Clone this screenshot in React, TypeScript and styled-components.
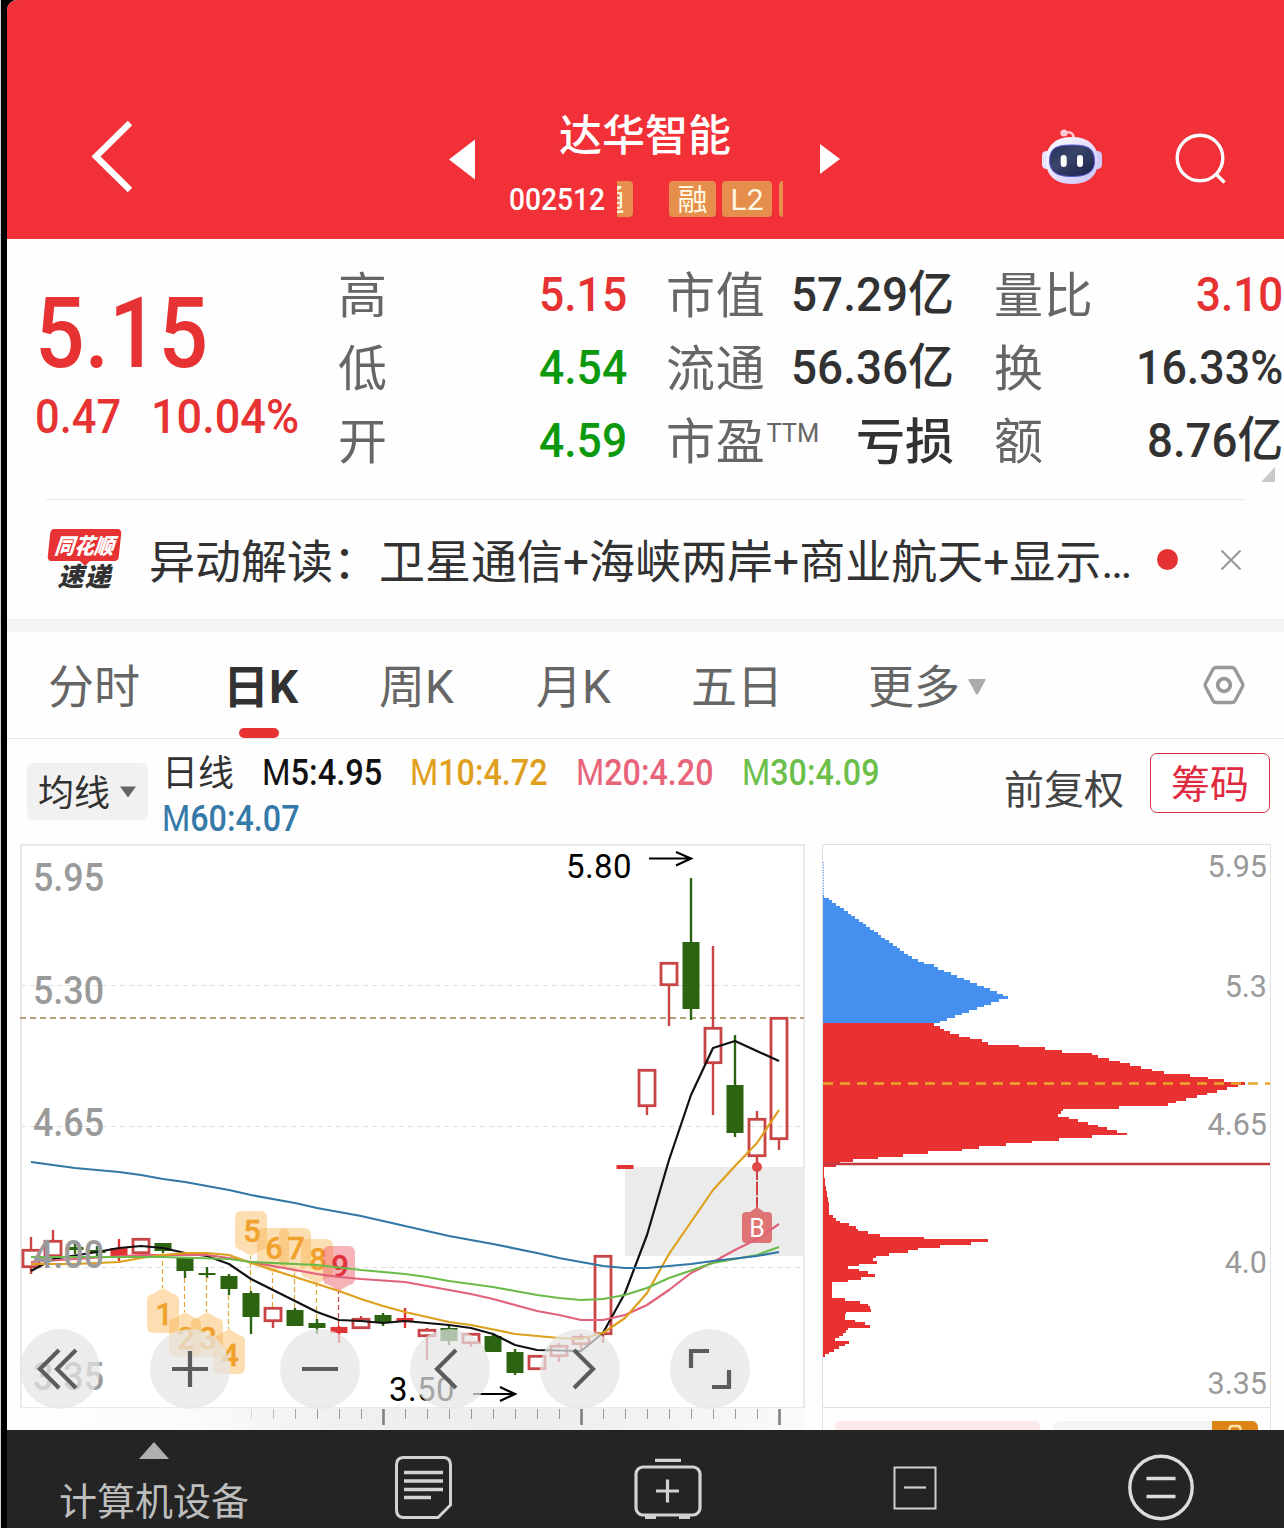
import React, { useLayoutEffect, useRef, useState } from "react";
import styled, { createGlobalStyle } from "styled-components";

const RED = "#e63232";
const GREEN = "#0d990d";
const INK = "#323232";
const CANDLE_RED = "#c94444";
const CANDLE_GREEN = "#2d6412";

const GlobalStyle = createGlobalStyle`
  html, body { margin: 0; padding: 0; background: #fff; }
  *, *::before, *::after { box-sizing: border-box; }
  body, svg text {
    font-family: Roboto, "Noto Sans CJK SC", sans-serif;
  }
  svg { display: block; flex: none; }
`;

/* ---------- condensed numerals ---------- */

const FitBox = styled.span<{ $w: number }>`
  display: inline-block;
  flex: none;
  width: ${(p) => p.$w}px;
  white-space: nowrap;
`;

const FitInner = styled.span`
  display: inline-block;
  transform-origin: 0 50%;
`;

function Fit({ w, children }: { w: number; children: React.ReactNode }) {
  const ref = useRef<HTMLSpanElement>(null);
  const [k, setK] = useState(1);
  useLayoutEffect(() => {
    if (ref.current) setK(w / ref.current.offsetWidth);
  }, [w]);
  return (
    <FitBox $w={w}>
      <FitInner ref={ref} style={{ transform: `scaleX(${k})` }}>
        {children}
      </FitInner>
    </FitBox>
  );
}

/* ---------- shell ---------- */

const Screen = styled.div`
  display: flex;
  width: 1284px;
  height: 1528px;
  overflow: hidden;
  background: #000;
`;

const Edge = styled.div`
  flex: none;
  width: 7px;
  border-left: 1px solid #cfcfcf;
  background: #000;
`;

const Page = styled.main`
  display: flex;
  flex-direction: column;
  width: 1277px;
  height: 1528px;
  overflow: hidden;
  background: #fefefe;
  border-top-left-radius: 10px;
`;

/* ---------- header ---------- */

const Header = styled.header`
  display: flex;
  flex: none;
  align-items: flex-start;
  height: 239px;
  padding: 112px 49px 0 83px;
  background: #f23038;
`;

const IconSlot = styled.div<{ $left: number; $top: number }>`
  flex: none;
  margin: ${(p) => p.$top}px 0 0 ${(p) => p.$left}px;
`;

const TitleBlock = styled.div`
  display: flex;
  flex: none;
  flex-direction: column;
  width: 274px;
  margin-left: 34px;
  color: #fff;
`;

const Title = styled.h1`
  margin: 0 0 0 50px;
  font-size: 43px;
  font-weight: 500;
  line-height: 48px;
`;

const CodeRow = styled.div`
  display: flex;
  align-items: center;
  height: 36px;
  margin-top: 21px;
  font-size: 32px;
  font-weight: 500;
  line-height: 36px;
`;

const TagWindow = styled.div`
  display: flex;
  justify-content: flex-end;
  width: 166px;
  height: 36px;
  margin-left: 12px;
  overflow: hidden;
`;

const Tag = styled.span<{ $w: number; $gap: number }>`
  flex: none;
  width: ${(p) => p.$w}px;
  height: 36px;
  margin-left: ${(p) => p.$gap}px;
  border-radius: 4px;
  background: #e68e4b;
  color: #fff8e4;
  font-size: 30px;
  font-weight: 400;
  line-height: 37px;
  text-align: center;
`;

const TagSliver = styled.span`
  flex: none;
  width: 4px;
  height: 36px;
  margin-left: 7px;
  border-radius: 4px 0 0 4px;
  background: #e68e4b;
`;

/* ---------- quote ---------- */

const Quote = styled.section`
  display: flex;
  flex: none;
  height: 260px;
  padding: 19px 1px 0 28px;
`;

const PriceBlock = styled.div`
  width: 303px;
  padding-top: 26px;
  color: ${RED};
`;

const Price = styled.div`
  height: 100px;
  font-size: 98px;
  font-weight: 500;
  line-height: 100px;
`;

const Changes = styled.div`
  display: flex;
  gap: 30px;
  height: 60px;
  margin-top: 3px;
  font-size: 49px;
  font-weight: 500;
  line-height: 60px;
`;

const StatColumn = styled.div<{ $w: number; $gap: number }>`
  flex: none;
  width: ${(p) => p.$w}px;
  margin-left: ${(p) => p.$gap}px;
`;

const StatRow = styled.div`
  display: flex;
  justify-content: space-between;
  height: 73px;
  font-size: 49px;
  line-height: 73px;
  white-space: nowrap;
`;

const StatLabel = styled.span`
  padding-top: 2px;
  color: #666;
  letter-spacing: 0.7px;
`;

const Sup = styled.span`
  display: inline-block;
  margin-left: 1px;
  font-size: 25.5px;
  letter-spacing: 0;
  transform: translateY(-17px);
`;

const StatValue = styled.span<{ $color?: string; $drop?: boolean }>`
  padding-top: ${(p) => (p.$drop ? 2 : 0)}px;
  color: ${(p) => p.$color ?? INK};
  font-weight: 500;
`;

const CornerWrap = styled.div`
  align-self: flex-end;
  width: 0;
  margin-bottom: 17px;

  svg { margin-left: -22px; }
`;

const Divider = styled.div`
  flex: none;
  height: 1px;
  margin: 0 40px 0 39px;
  background: #e8e8e8;
`;

/* ---------- news ---------- */

const News = styled.section`
  display: flex;
  flex: none;
  align-items: center;
  height: 119px;
  padding: 0 42px 0 41px;
`;

const Brand = styled.div`
  display: flex;
  flex: none;
  flex-direction: column;
  align-items: center;
  width: 73px;
  height: 62px;
  font-style: italic;
  font-weight: 900;
`;

const BrandTop = styled.div`
  width: 71px;
  height: 32px;
  border-radius: 4px;
  background: ${RED};
  color: #fff;
  font-size: 22px;
  line-height: 35px;
  text-align: center;
  transform: skewX(-6deg);
  white-space: nowrap;
`;

const BrandPointer = styled.div`
  width: 0;
  height: 0;
  border: 5px solid transparent;
  border-top-color: ${RED};
  border-bottom: 0;
`;

const BrandBottom = styled.div`
  margin-top: -2px;
  color: ${INK};
  font-size: 26px;
  line-height: 26px;
  letter-spacing: 1px;
`;

const Headline = styled.div`
  flex: none;
  width: 984px;
  margin-left: 28px;
  padding-top: 5px;
  color: ${INK};
  font-size: 46px;
  line-height: 60px;
  white-space: nowrap;
`;

const Dot = styled.span`
  flex: none;
  width: 21px;
  height: 21px;
  margin: -1px 43px 0 24px;
  border-radius: 50%;
  background: ${RED};
`;

const Band = styled.div`
  flex: none;
  height: 13px;
  background: #f4f4f4;
`;

/* ---------- period tabs ---------- */

const Tabs = styled.nav`
  display: flex;
  flex: none;
  align-items: stretch;
  height: 107px;
  padding-left: 41px;
  border-bottom: 1px solid #e4e4e4;
`;

const Tab = styled.div<{ $w: number; $active?: boolean }>`
  display: flex;
  flex: none;
  flex-direction: column;
  justify-content: space-between;
  width: ${(p) => p.$w}px;
  padding-top: 25px;
  color: ${(p) => (p.$active ? INK : "#666")};
  font-size: 46px;
  font-weight: ${(p) => (p.$active ? 700 : 400)};
  line-height: 60px;
  white-space: nowrap;
`;

const TabLabel = styled.span`
  display: flex;
  align-items: center;
  gap: 8px;
`;

const TabMark = styled.span`
  width: 40px;
  height: 10px;
  margin-left: 16px;
  border-radius: 5px;
  background: ${RED};
`;

const GearSlot = styled.div`
  display: flex;
  align-items: center;
  margin-left: 3px;
`;

/* ---------- moving-average legend ---------- */

const Legend = styled.section`
  display: flex;
  flex: none;
  height: 105px;
  padding: 0 14px 0 20px;
`;

const Picker = styled.div`
  display: flex;
  flex: none;
  align-items: center;
  gap: 10px;
  width: 121px;
  height: 57px;
  margin-top: 24px;
  padding-left: 11px;
  border-radius: 6px;
  background: #f1f1f1;
  color: ${INK};
  font-size: 36px;
  line-height: 57px;
`;

const PickerText = styled.span`
  padding-top: 6px;
`;

const Averages = styled.div`
  display: flex;
  flex: none;
  flex-wrap: wrap;
  align-content: flex-start;
  column-gap: 28px;
  width: 780px;
  margin: 11px 0 0 14px;
  font-size: 37px;
  line-height: 46px;
`;

const SeriesName = styled.span`
  width: 72px;
  height: 46px;
  padding-top: 1px;
  color: ${INK};
  font-size: 36px;
`;

const Average = styled.span<{ $color: string }>`
  color: ${(p) => p.$color};
  font-weight: 500;
`;

const Letter = styled.span`
  font-weight: 400;
`;

const Adjust = styled.div`
  margin: 22px 0 0 62px;
  color: #444;
  font-size: 40px;
  line-height: 60px;
  white-space: nowrap;
`;

const ChipButton = styled.button`
  flex: none;
  width: 120px;
  height: 60px;
  margin: 14px 0 0 auto;
  padding: 5px 0 0;
  border: 1.5px solid #d33344;
  border-radius: 7px;
  background: #fff;
  color: #e02a40;
  font-family: inherit;
  font-size: 39px;
  line-height: 53px;
`;

/* ---------- charts ---------- */

const Charts = styled.section`
  display: flex;
  flex: none;
  height: 586px;
  padding-left: 13px;
  overflow: hidden;
`;

const KPanel = styled.div`
  position: relative;
  flex: none;
  width: 785px;
`;

const Ruler = styled.div`
  height: 22px;
  background: linear-gradient(90deg, #fefefe 0%, #fbfbfb 22%, #f0f0f0 40%, #ededed 66%, #fafafa 100%);
`;

const Controls = styled.div`
  position: absolute;
  left: 0;
  top: 485px;
  display: flex;
  gap: 50px;
`;

const RoundButton = styled.div`
  display: flex;
  align-items: center;
  justify-content: center;
  width: 80px;
  height: 80px;
  border-radius: 50%;
  background: rgba(228, 228, 228, 0.72);
`;

const ChipPanel = styled.div`
  display: flex;
  flex: none;
  flex-direction: column;
  width: 449px;
  margin-left: 17px;
`;

const ChipFooter = styled.div`
  display: flex;
  gap: 13px;
  height: 22px;
  padding: 13px 12px 0;
  border: solid #e2e2e2;
  border-width: 0 1px;
`;

const ChipTab = styled.div<{ $bg: string }>`
  display: flex;
  flex: 1;
  justify-content: flex-end;
  height: 40px;
  overflow: hidden;
  border-radius: 6px;
  background: ${(p) => p.$bg};
`;

const LockBadge = styled.div`
  display: flex;
  justify-content: center;
  width: 46px;
  background: #dc8414;
`;

/* ---------- bottom bar ---------- */

const BottomBar = styled.footer`
  display: flex;
  flex: none;
  height: 98px;
  background: #242424;
  color: #bdbdbd;
`;

const Sector = styled.div`
  display: flex;
  flex: none;
  flex-direction: column;
  align-items: center;
  width: 294px;
  padding-top: 12px;
  font-size: 38px;
  line-height: 48px;
`;

const SectorName = styled.span`
  margin-top: 19px;
  white-space: nowrap;
`;

const BarIcon = styled.div<{ $left: number; $top: number }>`
  flex: none;
  margin: ${(p) => p.$top}px 0 0 ${(p) => p.$left}px;
`;

/* ---------- data ---------- */

type Stat = { label: string; sup?: string; value: string; w: number; color?: string };

const STATS: { w: number; gap: number; rows: Stat[] }[] = [
  {
    w: 289,
    gap: 0,
    rows: [
      { label: "高", value: "5.15", w: 88, color: RED },
      { label: "低", value: "4.54", w: 88, color: GREEN },
      { label: "开", value: "4.59", w: 88, color: GREEN },
    ],
  },
  {
    w: 288,
    gap: 39,
    rows: [
      { label: "市值", value: "57.29亿", w: 163 },
      { label: "流通", value: "56.36亿", w: 163 },
      { label: "市盈", sup: "TTM", value: "亏损", w: 98 },
    ],
  },
  {
    w: 289,
    gap: 40,
    rows: [
      { label: "量比", value: "3.10", w: 87, color: RED },
      { label: "换", value: "16.33%", w: 147 },
      { label: "额", value: "8.76亿", w: 136 },
    ],
  },
];

const AVERAGES = [
  { name: "5:4.95", color: "#111", w: 120 },
  { name: "10:4.72", color: "#dfa01e", w: 138 },
  { name: "20:4.20", color: "#e8647a", w: 138 },
  { name: "30:4.09", color: "#6cbf4a", w: 138 },
  { name: "60:4.07", color: "#3579a8", w: 138 },
];

/* kind, body top, body bottom, high, low */
type Candle = ["h" | "f" | "g", number, number, number, number];

const CANDLES: Candle[] = [
  ["h", 1249, 1268, 1237, 1274],
  ["h", 1240, 1257, 1230, 1257],
  ["g", 1247, 1250, 1244, 1254],
  ["g", 1250, 1253, 1246, 1256],
  ["f", 1248, 1257, 1239, 1261],
  ["h", 1238, 1254, 1238, 1256],
  ["g", 1243, 1251, 1243, 1253],
  ["g", 1258, 1271, 1258, 1278],
  ["g", 1273, 1275, 1267, 1278],
  ["g", 1276, 1289, 1274, 1295],
  ["g", 1293, 1317, 1291, 1334],
  ["h", 1307, 1322, 1307, 1328],
  ["g", 1310, 1326, 1308, 1326],
  ["g", 1323, 1328, 1319, 1334],
  ["f", 1327, 1333, 1326, 1343],
  ["h", 1318, 1329, 1316, 1329],
  ["g", 1315, 1322, 1313, 1326],
  ["f", 1318, 1322, 1308, 1328],
  ["h", 1329, 1337, 1328, 1360],
  ["g", 1328, 1341, 1326, 1345],
  ["h", 1333, 1344, 1333, 1347],
  ["g", 1336, 1352, 1335, 1352],
  ["g", 1352, 1373, 1349, 1375],
  ["h", 1355, 1370, 1355, 1370],
  ["h", 1345, 1357, 1343, 1362],
  ["h", 1336, 1345, 1334, 1349],
  ["h", 1255, 1335, 1255, 1343],
  ["f", 1165, 1169, 1165, 1169],
  ["h", 1069, 1107, 1069, 1115],
  ["h", 962, 986, 962, 1026],
  ["g", 942, 1009, 878, 1020],
  ["h", 1027, 1064, 946, 1115],
  ["g", 1085, 1133, 1035, 1137],
  ["h", 1118, 1157, 1111, 1166],
  ["h", 1017, 1140, 1017, 1150],
];

const LINES = [
  {
    color: "#111",
    points:
      "31,1271 53,1259 97,1252 119,1248 141,1246 163,1248 185,1253 207,1256 229,1264 251,1279 273,1290 295,1301 317,1312 339,1320 361,1321 383,1323 405,1321 449,1325 471,1328 493,1334 515,1345 537,1350 581,1351 603,1333 625,1293 647,1235 669,1160 691,1095 713,1048 735,1041 779,1061",
  },
  {
    color: "#e2617a",
    points:
      "31,1262 75,1259 141,1255 207,1255 229,1258 251,1262 295,1270 317,1274 339,1277 361,1279 405,1282 427,1286 471,1294 493,1299 515,1305 537,1311 559,1315 581,1320 603,1320 625,1315 647,1305 669,1290 691,1273 713,1262 735,1250 757,1239 779,1224",
  },
  {
    color: "#dda01c",
    points:
      "31,1264 75,1264 119,1262 141,1258 163,1255 185,1253 207,1253 229,1255 251,1263 295,1277 317,1284 339,1291 361,1299 383,1306 405,1312 449,1322 471,1325 515,1334 559,1338 581,1339 603,1333 625,1318 647,1293 669,1254 691,1222 713,1190 735,1166 757,1143 779,1110",
  },
  {
    color: "#6cbb4a",
    points:
      "31,1257 119,1257 163,1257 229,1259 251,1262 317,1265 361,1270 405,1274 427,1277 449,1281 493,1287 515,1291 537,1295 559,1298 581,1300 603,1299 625,1295 647,1288 669,1278 713,1263 757,1255 779,1247",
  },
  {
    color: "#3278a4",
    points:
      "31,1162 75,1168 119,1172 141,1175 163,1179 185,1182 229,1190 251,1195 295,1203 317,1208 361,1216 405,1226 449,1236 493,1244 537,1253 559,1258 581,1262 603,1266 625,1268 647,1268 669,1266 691,1264 713,1261 757,1256 779,1252",
  },
];

/* nine-turn markers: digit, centre x, box top, stem end, box above candle */
type Mark = { n: number; x: number; top: number; stem: number; up?: boolean; hot?: boolean };

const MARKS: Mark[] = [
  { n: 1, x: 163, top: 1294, stem: 1253 },
  { n: 2, x: 185, top: 1318, stem: 1278 },
  { n: 3, x: 207, top: 1318, stem: 1277 },
  { n: 4, x: 229, top: 1335, stem: 1295 },
  { n: 5, x: 251, top: 1211, stem: 1291, up: true },
  { n: 6, x: 273, top: 1228, stem: 1307, up: true },
  { n: 7, x: 295, top: 1228, stem: 1308, up: true },
  { n: 8, x: 317, top: 1239, stem: 1319, up: true },
  { n: 9, x: 339, top: 1246, stem: 1326, up: true, hot: true },
];

const AXIS: [string, number][] = [
  ["5.95", 891],
  ["5.30", 1004],
  ["4.65", 1136],
  ["4.00", 1267.5],
  ["3.35", 1389.5],
];

const CHIP_AXIS: [string, number][] = [
  ["5.95", 877.5],
  ["5.3", 997.5],
  ["4.65", 1135.5],
  ["4.0", 1273.5],
  ["3.35", 1394.5],
];

const PROFILE: [number, number][] = [
  [895, 823], [958, 912], [967, 934], [997, 1008], [1024, 934], [1033, 950], [1042, 988],
  [1049, 1045], [1055, 1092], [1073, 1164], [1075, 1190], [1084, 1245], [1104, 1168],
  [1111, 1063], [1115, 1058], [1134, 1127], [1136, 1092], [1149, 962], [1162, 840],
  [1167, 836], [1168, 824], [1176, 824], [1205, 829], [1214, 829], [1222, 840], [1227, 856], [1231, 858],
  [1235, 880], [1238, 924], [1242, 988], [1246, 940], [1250, 918], [1256, 876], [1258, 870],
  [1261, 877], [1267, 848], [1275, 875], [1281, 848], [1284, 832], [1296, 832], [1299, 845],
  [1304, 868], [1310, 871], [1312, 846], [1318, 845], [1325, 870], [1330, 848], [1340, 835],
  [1343, 849], [1350, 834], [1357, 823],
];

const BAR_STEP = 2.67;

function profileWidth(y: number) {
  for (const [vy, vx] of PROFILE) {
    if (vy >= y && vy < y + BAR_STEP) return vx - 823;
  }
  const mid = y + BAR_STEP / 2;
  for (let i = 1; i < PROFILE.length; i++) {
    const [y0, x0] = PROFILE[i - 1];
    const [y1, x1] = PROFILE[i];
    if (mid <= y1) return x0 + ((x1 - x0) * (mid - y0)) / (y1 - y0) - 823;
  }
  return 0;
}

const BARS = Array.from({ length: 173 }, (_, i) => {
  const y = 895 + i * BAR_STEP;
  return { y, w: Math.max(0.5, profileWidth(y)), blue: y < 1022.5 };
});

/* ---------- drawings ---------- */

const CandleShape = ({ c, x }: { c: Candle; x: number }) => {
  const [kind, top, bottom, high, low] = c;
  const color = kind === "g" ? CANDLE_GREEN : kind === "f" ? "#e03434" : CANDLE_RED;
  const hollow = kind === "h";
  return (
    <g stroke={color} strokeWidth={2.4} fill="none">
      {high < top && <line x1={x} x2={x} y1={high} y2={top} />}
      {low > bottom && <line x1={x} x2={x} y1={bottom} y2={low} />}
      {hollow ? (
        <rect x={x - 8} y={top + 1.3} width={16} height={bottom - top - 2.6} strokeWidth={2.8} />
      ) : (
        <rect x={x - 8.5} y={top} width={17} height={bottom - top} fill={color} stroke="none" />
      )}
    </g>
  );
};

const MarkShape = ({ m }: { m: Mark }) => {
  const bg = m.hot ? "#ee4a58" : "#f9b34a";
  const edge = m.up ? m.top + 39 : m.top;
  const tip = m.up ? m.top + 45 : m.top - 6;
  return (
    <g>
      <line
        x1={m.x - 0.5}
        x2={m.x - 0.5}
        y1={m.stem}
        y2={tip}
        stroke={m.hot ? "#d04040" : "#dfa63a"}
        strokeWidth={1.2}
        strokeDasharray="5 3"
      />
      <g fill={bg} opacity={0.42}>
        <rect x={m.x - 16} y={m.top} width={32} height={39} rx={6} />
        <path d={`M${m.x - 10} ${edge}L${m.x} ${tip}L${m.x + 10} ${edge}Z`} />
      </g>
      <text
        x={m.x + 1}
        y={m.top + 30.5}
        textAnchor="middle"
        fontSize={31}
        fontWeight={500}
        fill={m.hot ? "#e03238" : "#f0a12c"}
        stroke={m.hot ? "#e03238" : "#f0a12c"}
        strokeWidth={0.4}
      >
        {m.n}
      </text>
    </g>
  );
};

const KChart = () => (
  <svg width={785} height={564} viewBox="20 844 785 564">
    <rect x={21} y={845} width={783} height={563} fill="#fff" stroke="#e9e9e9" strokeWidth={2} />
    <g stroke="#dedede" strokeWidth={1.2} strokeDasharray="5 4">
      <line x1={21} x2={804} y1={985.5} y2={985.5} />
      <line x1={21} x2={804} y1={1126.5} y2={1126.5} />
      <line x1={21} x2={804} y1={1267.5} y2={1267.5} />
    </g>
    <line x1={20} x2={804} y1={1018} y2={1018} stroke="#b5a375" strokeWidth={1.8} strokeDasharray="6 4" />
    <rect x={625} y={1167} width={180} height={89} fill="#ebebeb" />
    {CANDLES.map((c, i) => (
      <CandleShape key={i} c={c} x={31 + i * 22} />
    ))}
    {MARKS.map((m) => (
      <MarkShape key={m.n} m={m} />
    ))}
    <line x1={757} x2={757} y1={1166} y2={1209} stroke="#d04040" strokeWidth={2} strokeDasharray="14 1.5" />
    <circle cx={757} cy={1167} r={5} fill="#e04848" />
    <path d="M750 1212L757 1207L764 1212Z" fill="#df7474" />
    <rect x={742} y={1212} width={30} height={31} rx={4} fill="#df7474" />
    {LINES.map((l) => (
      <polyline key={l.color} points={l.points} fill="none" stroke={l.color} strokeWidth={2.2} strokeLinejoin="round" />
    ))}
    <text x={757} y={1237} textAnchor="middle" fontSize={25} fill="#fff">
      B
    </text>
    {AXIS.map(([t, y]) => (
      <text key={t} x={33} y={y} fontSize={38} fontWeight={500} fill="#9a9a9a" textLength={71} lengthAdjust="spacingAndGlyphs">
        {t}
      </text>
    ))}
    <g fontSize={33} fill="#000" letterSpacing={0.4}>
      <text x={566} y={878}>5.80</text>
      <text x={389} y={1401}>3.50</text>
    </g>
    <g fill="none" stroke="#000" strokeWidth={2.2}>
      <path d="M649 858.5H690M676 852L691 858.5L676 865.5" />
      <path d="M473 1394H514M500 1387L515 1394L500 1401" />
    </g>
  </svg>
);

const RulerTicks = () => (
  <svg width={785} height={22} viewBox="20 1408 785 22">
    {Array.from({ length: 25 }, (_, i) => {
      const x = 251 + i * 22;
      const major = x === 383 || x === 581 || x === 779;
      return (
        <line
          key={i}
          x1={x + 0.5}
          x2={x + 0.5}
          y1={1409}
          y2={major ? 1425 : 1419}
          stroke={major ? "#808080" : "#999"}
          strokeWidth={major ? 2.6 : 1}
          opacity={major ? 1 : Math.min(1, 0.35 + i * 0.25)}
        />
      );
    })}
  </svg>
);

const ChipChart = () => (
  <svg width={449} height={564} viewBox="822 844 449 564">
    <rect x={822.5} y={844.5} width={448} height={563} fill="#fff" stroke="#e0e0e0" />
    <line x1={823.5} x2={823.5} y1={862} y2={895} stroke="#4590ee" strokeDasharray="1 1.6" />
    <g shapeRendering="crispEdges">
      {BARS.map((b) => (
        <rect key={b.y} x={823} y={b.y} width={b.w} height={2.8} fill={b.blue ? "#4590ee" : "#e93131"} />
      ))}
    </g>
    <line x1={823} x2={1270} y1={1164} y2={1164} stroke="#c23b42" strokeWidth={2.4} />
    <line x1={823} x2={1270} y1={1083.5} y2={1083.5} stroke="#eba62c" strokeWidth={2.4} strokeDasharray="10 7" />
    {CHIP_AXIS.map(([t, y]) => (
      <text key={t} x={1267} y={y - 0.5} textAnchor="end" fontSize={30.5} fill="#999">
        {t}
      </text>
    ))}
  </svg>
);

const Robot = () => (
  <svg width={60} height={56} viewBox="0 0 60 56">
    <defs>
      <linearGradient id="shell" x1="0" y1="0" x2="1" y2="1">
        <stop offset="0" stopColor="#ffffff" />
        <stop offset="0.55" stopColor="#e3dcfb" />
        <stop offset="1" stopColor="#c7c3f8" />
      </linearGradient>
      <linearGradient id="visor" x1="0" y1="0" x2="1" y2="1">
        <stop offset="0" stopColor="#28305a" />
        <stop offset="0.4" stopColor="#3a4468" />
        <stop offset="1" stopColor="#16204c" />
      </linearGradient>
    </defs>
    <path d="M23 4C28 2 32 4 31.5 10" fill="none" stroke="#ffc4cf" strokeWidth={2.6} />
    <circle cx={22} cy={4} r={3.6} fill="#ffc9d3" />
    <rect x={0} y={22} width={9} height={18} rx={4.5} fill="#e8e4fc" />
    <rect x={51} y={22} width={9} height={18} rx={4.5} fill="#cfc9f8" />
    <path
      d="M30 8C46 8 55 16 56 29C57 43 50 55 30 55C10 55 3 43 4 29C5 16 14 8 30 8Z"
      fill="url(#shell)"
    />
    <path
      d="M30 16C45 16 52 18.500 52.500 31C53 42.500 46 47.500 30 47.500C14 47.500 7.500 42.500 7.500 31C8 18.500 15 16 30 16Z"
      fill="url(#visor)"
      stroke="#5d5be0"
      strokeWidth={1}
    />
    <rect x={18.7} y={26} width={6} height={12} rx={3} fill="#fff" />
    <rect x={35} y={26} width={6} height={12} rx={3} fill="#fff" />
  </svg>
);

const CONTROL_PATHS = [
  "M39 21L20 40L39 59M56 21L37 40L56 59",
  "M22 40H58M40 22V58",
  "M22 40H58",
  "M46 21L27 40L46 59",
  "M34 21L53 40L34 59",
  "M21 39V22H39M42 58H59V41",
];

/* ---------- page ---------- */

export default function App() {
  return (
    <Screen>
      <GlobalStyle />
      <Edge />
      <Page>
        <Header>
          <IconSlot $left={0} $top={8}>
            <svg width={44} height={74} viewBox="0 0 44 74" fill="none" stroke="#fff" strokeWidth={6.4}>
              <path d="M40 3L6 36.500L40 70" />
            </svg>
          </IconSlot>
          <IconSlot $left={314} $top={27}>
            <svg width={27} height={41} viewBox="0 0 27 41">
              <path d="M27 0.500V40.500L1 20.500Z" fill="#fff" />
            </svg>
          </IconSlot>
          <TitleBlock>
            <Title>达华智能</Title>
            <CodeRow>
              <Fit w={96}>002512</Fit>
              <TagWindow>
                <Tag $w={47} $gap={0}>通</Tag>
                <Tag $w={47} $gap={36}>融</Tag>
                <Tag $w={50} $gap={6}>L2</Tag>
                <TagSliver />
              </TagWindow>
            </CodeRow>
          </TitleBlock>
          <IconSlot $left={37} $top={32}>
            <svg width={20} height={30} viewBox="0 0 20 30">
              <path d="M0 0L20 15L0 30Z" fill="#fff" />
            </svg>
          </IconSlot>
          <IconSlot $left={202} $top={17}>
            <Robot />
          </IconSlot>
          <IconSlot $left={73} $top={21}>
            <svg width={52} height={54} viewBox="0 0 52 54" fill="none" stroke="#fff" strokeWidth={3.4}>
              <circle cx={25} cy={25} r={22.8} />
              <path d="M41 41L49.500 49.500" />
            </svg>
          </IconSlot>
        </Header>

        <Quote>
          <PriceBlock>
            <Price>
              <Fit w={173}>5.15</Fit>
            </Price>
            <Changes>
              <Fit w={86}>0.47</Fit>
              <Fit w={148}>10.04%</Fit>
            </Changes>
          </PriceBlock>
          {STATS.map((col, i) => (
            <StatColumn key={i} $w={col.w} $gap={col.gap}>
              {col.rows.map((s) => (
                <StatRow key={s.label}>
                  <StatLabel>
                    {s.label}
                    {s.sup && <Sup>{s.sup}</Sup>}
                  </StatLabel>
                  <StatValue $color={s.color} $drop={!!s.sup}>
                    <Fit w={s.w}>{s.value}</Fit>
                  </StatValue>
                </StatRow>
              ))}
            </StatColumn>
          ))}
          <CornerWrap>
            <svg width={14} height={15} viewBox="0 0 14 15">
              <path d="M14 0V15H0Z" fill="#c9c9c9" />
            </svg>
          </CornerWrap>
        </Quote>
        <Divider />

        <News>
          <Brand>
            <BrandTop>
              <Fit w={59}>同花顺</Fit>
            </BrandTop>
            <BrandPointer />
            <BrandBottom>速递</BrandBottom>
          </Brand>
          <Headline>异动解读：卫星通信+海峡两岸+商业航天+显示…</Headline>
          <Dot />
          <svg width={20} height={22} viewBox="0 0 20 22" stroke="#999" strokeWidth={2}>
            <path d="M0.500 1.500L19.500 20.500M19.500 1.500L0.500 20.500" />
          </svg>
        </News>
        <Band />

        <Tabs>
          <Tab $w={175}>分时</Tab>
          <Tab $w={156} $active>
            <TabLabel>日K</TabLabel>
            <TabMark />
          </Tab>
          <Tab $w={157}>周K</Tab>
          <Tab $w={155}>月K</Tab>
          <Tab $w={177}>五日</Tab>
          <Tab $w={332}>
            <TabLabel>
              更多
              <svg width={18} height={16} viewBox="0 0 18 16">
                <path d="M1 0H17Q18 0 17.500 1.200L10 15Q9 16 8 15L0.500 1.200Q0 0 1 0Z" fill="#aaa" />
              </svg>
            </TabLabel>
          </Tab>
          <GearSlot>
            <svg width={42} height={40} viewBox="0 0 42 40" fill="none" stroke="#999" strokeWidth={3.4}>
              <path
                d="M13 2.500H29Q31 2.500 32 4.300L39.300 18Q40.300 20 39.300 22L32 35.700Q31 37.500 29 37.500H13Q11 37.500 10 35.700L2.700 22Q1.700 20 2.700 18L10 4.300Q11 2.500 13 2.500Z"
                strokeLinejoin="round"
              />
              <circle cx={21} cy={20} r={6.3} strokeWidth={3.8} />
            </svg>
          </GearSlot>
        </Tabs>

        <Legend>
          <Picker>
            <PickerText>均线</PickerText>
            <svg width={16} height={12} viewBox="0 0 16 12">
              <path d="M0 0.500H16L8 11.500Z" fill="#666" />
            </svg>
          </Picker>
          <Averages>
            <SeriesName>日线</SeriesName>
            {AVERAGES.map((a) => (
              <Average key={a.name} $color={a.color}>
                <Fit w={a.w}>
                  <Letter>M</Letter>
                  {a.name}
                </Fit>
              </Average>
            ))}
          </Averages>
          <Adjust>前复权</Adjust>
          <ChipButton>筹码</ChipButton>
        </Legend>

        <Charts>
          <KPanel>
            <KChart />
            <Ruler>
              <RulerTicks />
            </Ruler>
            <Controls>
              {CONTROL_PATHS.map((d) => (
                <RoundButton key={d}>
                  <svg width={80} height={80} viewBox="0 0 80 80" fill="none" stroke="#5c5c5c" strokeWidth={4.2}>
                    <path d={d} />
                  </svg>
                </RoundButton>
              ))}
            </Controls>
          </KPanel>
          <ChipPanel>
            <ChipChart />
            <ChipFooter>
              <ChipTab $bg="#fde8ea" />
              <ChipTab $bg="#f4f4f4">
                <LockBadge>
                  <svg width={16} height={20} viewBox="0 0 16 20" fill="none" stroke="#ffe2a8" strokeWidth={2.4}>
                    <path d="M2.500 20V8Q2.500 5 5.500 5H10.500Q13.500 5 13.500 8V20" />
                  </svg>
                </LockBadge>
              </ChipTab>
            </ChipFooter>
          </ChipPanel>
        </Charts>

        <BottomBar>
          <Sector>
            <svg width={30} height={17} viewBox="0 0 30 17">
              <path d="M15 0L30 17H0Z" fill="#b0b0b0" />
            </svg>
            <SectorName>计算机设备</SectorName>
          </Sector>
          <BarIcon $left={93} $top={25}>
            <svg width={60} height={66} viewBox="0 0 60 66" fill="none" stroke="#d2d2d2" strokeWidth={3}>
              <path d="M9 2.500H50Q56.500 3 56.500 10V50L44 62.500H9Q2.500 62 2.500 55V10Q2.500 3 9 2.500Z" />
              <path d="M10 17.500H49M10 26H49M10 34.500H49M10 42.500H37" strokeWidth={3.4} />
            </svg>
          </BarIcon>
          <BarIcon $left={180} $top={27}>
            <svg width={68} height={64} viewBox="0 0 68 64" fill="none" stroke="#d2d2d2" strokeWidth={3.2}>
              <rect x={2} y={10} width={64} height={48} rx={7} />
              <path d="M21 3.300H47M22 34H45M33.500 22.500V45.500" />
              <path d="M11 60.200H22M45 60.200H56" strokeWidth={3.6} />
            </svg>
          </BarIcon>
          <BarIcon $left={191} $top={36}>
            <svg width={44} height={44} viewBox="0 0 44 44" fill="none" stroke="#cfcfcf" strokeWidth={2}>
              <rect x={1.5} y={1.5} width={41} height={41} />
              <path d="M11 21.500H33" strokeWidth={2.2} />
            </svg>
          </BarIcon>
          <BarIcon $left={190} $top={24}>
            <svg width={68} height={68} viewBox="0 0 68 68" fill="none" stroke="#dcdcdc" strokeWidth={3.4}>
              <circle cx={34} cy={33.5} r={31.2} />
              <path d="M19.500 24.500H48.500M19.500 42.500H48.500" />
            </svg>
          </BarIcon>
        </BottomBar>
      </Page>
    </Screen>
  );
}
